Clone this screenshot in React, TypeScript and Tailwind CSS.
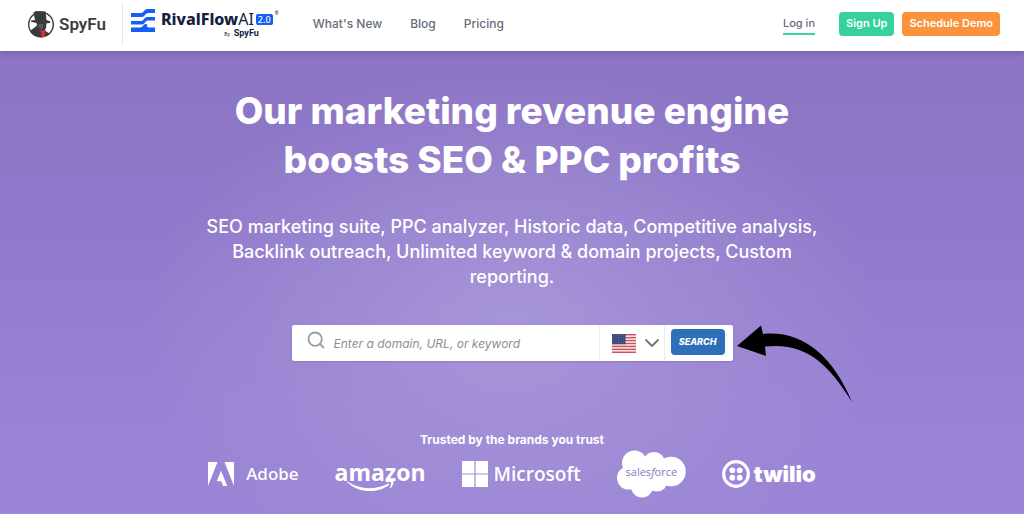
import type { ReactNode } from "react";
import { ChevronDown, Search } from "lucide-react";

// ── Data ──────────────────────────────────────────────────────────────────────

const NAV_LINKS = [
  { label: "What's New", href: "#whats-new" },
  { label: "Blog", href: "#blog" },
  { label: "Pricing", href: "#pricing" },
];

const STRIPES = [0, 2, 4, 6, 8, 10, 12];
const STAR_ROWS = [1, 2.7, 4.4, 6.1];
const STAR_COLS = [1.2, 3.6, 6, 8.4, 10.8];

// ── Logos ─────────────────────────────────────────────────────────────────────

function SpyFuLogo() {
  return (
    <a href="#home" className="flex items-center gap-1">
      <svg className="size-7" viewBox="0 0 28 28" aria-hidden="true">
        <circle cx="14" cy="14.5" r="12.3" fill="#fff" stroke="#3a3a3c" strokeWidth="1.4" />
        <path
          d="M6.5 2.500 9 1l9.500.5 1 8.500 4 1.400-.6 1.600-3.400.2-.5 4.800-1.500 2.600 5.500 3.100C20 26 17 27.200 14 27.200 9 27.200 5 25 3 21l4.500-3.500 2.500-2-.5-2.500-5.500-1.200.2-1.300L8 10z"
          fill="#3a3a3c"
        />
        <path d="M11 14h5l.5 3-2 2.200-2.500-1.200z" fill="#59595b" />
        <path d="m12.500 20 3 .8 1.500-1.200 2 1-1.200 2 .5 4-2.600 1-1.800-3 .4-2z" fill="#e3263a" />
      </svg>
      <span className="font-['Roboto',sans-serif] text-[17px] leading-6 font-semibold text-[#3d3d3f]">SpyFu</span>
    </a>
  );
}

function RivalFlowLogo() {
  return (
    <a href="#rivalflow" className="flex items-start gap-1.5 text-[#14203f]">
      <svg className="h-6 w-6" viewBox="0 0 24 24" fill="#1460f5" aria-hidden="true">
        <path d="M0 4h10c3 0 3-4 6-4h8v4h-7c-3 0-3 4-6 4H0z" />
        <path d="M0 12h10c3 0 3-4 6-4h8v3.500h-7c-3 0-3 4-6 4H0z" />
        <path d="M0 18.500h9c3 0 3-3.500 6-3.500h1.500c-1.500 1.500-.5 3.500 2 3.500H24V23H0z" />
      </svg>
      <span className="flex flex-col items-end">
        <span className="flex items-center gap-0.5 font-['Noto_Sans',sans-serif] text-base leading-5 font-extrabold">
          <span>
            RivalFlow<span className="font-normal">AI</span>
          </span>
          <span className="rounded-xs bg-[#1460f5] px-0.5 text-[9px] leading-[11px] font-medium text-white">2.0</span>
          <span className="self-start text-[5px] leading-2 font-normal">®</span>
        </span>
        <span className="mr-5 flex items-baseline gap-1 font-['Roboto',sans-serif] text-[9px] leading-2 font-bold">
          <span className="text-[5px] font-normal">By</span>SpyFu
        </span>
      </span>
    </a>
  );
}

function AdobeLogo() {
  return (
    <div className="flex items-center gap-3">
      <svg className="h-6 w-[26px]" viewBox="0 0 26 24" fill="currentColor" aria-hidden="true">
        <path d="M0 0h9.500L0 24zM16.500 0H26v24zM13 8.800 19.200 24h-4.100l-1.900-4.700H8.700z" />
      </svg>
      <span className="font-['Noto_Sans',sans-serif] text-[17px] font-medium">Adobe</span>
    </div>
  );
}

function AmazonLogo() {
  return (
    <div className="flex flex-col pt-1">
      <span className="font-['Open_Sans',sans-serif] text-[23px] leading-6 font-bold">amazon</span>
      <svg className="-mt-1 ml-3 h-3 w-12" viewBox="0 0 48 12" fill="currentColor" aria-hidden="true">
        <path d="M.5 1.500C13 10 28 10 41 3.700c1-.4 1.700.6.900 1.300C31 13.500 12 13.500.2 2.200c-.4-.5-.1-1 .3-.7z" />
        <path d="M38.500 1.600c2.600-1.700 7-1.600 7.800-.9.700.8-.3 5.300-2.800 7.300-.5.300-.8.100-.6-.4.700-1.700 1.700-4.500 1.100-5.200-.6-.7-3.600-.3-5.100-.2-.5 0-.7-.3-.4-.6z" />
      </svg>
    </div>
  );
}

function MicrosoftLogo() {
  return (
    <div className="flex items-center gap-1.5">
      <svg className="size-[26px]" viewBox="0 0 26 26" fill="currentColor" aria-hidden="true">
        <path d="M0 0h12.400v12.400H0zM13.600 0H26v12.400H13.600zM0 13.600h12.400V26H0zM13.600 13.600H26V26H13.600z" />
      </svg>
      <span className="font-['Open_Sans',sans-serif] text-[19px] font-semibold">Microsoft</span>
    </div>
  );
}

function SalesforceLogo() {
  return (
    <div className="relative flex h-12 w-[69px] items-center justify-center pb-1">
      <svg className="absolute inset-0 size-full" viewBox="0 0 69 48" fill="currentColor" aria-hidden="true">
        <circle cx="17.500" cy="13" r="12.500" />
        <circle cx="37" cy="13" r="11" />
        <circle cx="54" cy="21.500" r="14.800" />
        <circle cx="11.500" cy="28" r="11.500" />
        <circle cx="25" cy="36.500" r="11" />
        <circle cx="40" cy="31" r="10.500" />
        <path d="M12 14h36v18H12z" />
      </svg>
      <span className="relative font-['Open_Sans',sans-serif] text-[11px] leading-3 font-medium text-[#8a76c4]">
        sales<i>f</i>orce
      </span>
    </div>
  );
}

function TwilioLogo() {
  return (
    <div className="flex items-center gap-1">
      <svg className="size-7" viewBox="0 0 28 28" fill="currentColor" aria-hidden="true">
        <circle cx="14" cy="14" r="12.3" fill="none" stroke="currentColor" strokeWidth="3.2" />
        <circle cx="10.3" cy="10.3" r="2.9" />
        <circle cx="17.7" cy="10.3" r="2.9" />
        <circle cx="10.3" cy="17.7" r="2.9" />
        <circle cx="17.7" cy="17.7" r="2.9" />
      </svg>
      <span className="text-[22px] font-black">twilio</span>
    </div>
  );
}

// ── Search form ───────────────────────────────────────────────────────────────

function UsFlag() {
  return (
    <svg className="h-[19px] w-6" viewBox="0 0 24 13" preserveAspectRatio="none" aria-hidden="true">
      <rect width="24" height="13" fill="#f7f1f3" />
      {STRIPES.map((y) => (
        <rect key={y} y={y} width="24" height="1" fill="#c9505c" />
      ))}
      <rect width="13.500" height="7" fill="#3b4a7a" />
      {STAR_ROWS.map((y) =>
        STAR_COLS.map((x) => <rect key={`${x}-${y}`} x={x} y={y - 0.5} width="0.9" height="0.5" fill="#7f8bb3" />)
      )}
    </svg>
  );
}

function CurvedArrow() {
  return (
    <svg
      className="absolute top-0 left-full ml-1 h-[77px] w-[115px]"
      viewBox="0 0 115 77"
      fill="#000"
      aria-hidden="true"
    >
      <path d="M0 21 24 .5 26 9C64 5 95 29 115 77 92 40 70 17 28 21.500L29 31z" />
    </svg>
  );
}

function SearchForm() {
  return (
    <form
      className="relative mx-auto mt-9 w-full max-w-[441px]"
      onSubmit={(e) => e.preventDefault()}
    >
      <div className="flex h-9 items-stretch rounded-xs bg-white shadow-sm">
        <label htmlFor="query" className="flex items-center pb-1.5 pl-3.5 text-[#9a9ca6]">
          <Search className="size-5" strokeWidth={2.2} aria-label="Search term" />
        </label>
        <input
          id="query"
          type="text"
          placeholder="Enter a domain, URL, or keyword"
          className="min-w-0 flex-1 px-2 pt-0.5 text-xs text-gray-700 italic outline-none placeholder:text-[#8e8e93]"
        />
        <div className="relative flex items-center gap-1 border-x border-[#ededf1] pl-3">
          <UsFlag />
          <ChevronDown className="size-6 text-[#77777d]" aria-hidden="true" />
          <select aria-label="Country" className="absolute inset-0 size-full cursor-pointer opacity-0">
            <option>US</option>
          </select>
        </div>
        <button
          type="submit"
          className="mt-1 mr-2 mb-1.5 ml-1.5 rounded-sm bg-[#2d6fb8] px-2 text-[9px] font-extrabold text-white italic"
        >
          SEARCH
        </button>
      </div>
      <CurvedArrow />
    </form>
  );
}

// ── Page ──────────────────────────────────────────────────────────────────────

function Header() {
  return (
    <header className="relative flex h-[51px] items-center bg-white pr-6 pb-1 pl-[27px] text-xs font-medium text-[#676e78] shadow-md">
      <SpyFuLogo />
      <div className="mr-2 ml-4 h-11 w-px bg-[#e6e6ec]" />
      <RivalFlowLogo />
      <nav className="ml-[34px] flex gap-7">
        {NAV_LINKS.map((link) => (
          <a key={link.label} href={link.href}>
            {link.label}
          </a>
        ))}
      </nav>
      <div className="ml-auto flex items-center gap-2 text-[11px] font-semibold">
        <a href="#login" className="mr-4 border-b-2 border-[#38d39f] pt-1 pb-0.5 font-medium">
          Log in
        </a>
        <button type="button" className="h-6 rounded-sm bg-[#35d29b] px-[7px] text-white">
          Sign Up
        </button>
        <button type="button" className="h-6 rounded-sm bg-[#fb923c] px-[7px] text-white">
          Schedule Demo
        </button>
      </div>
    </header>
  );
}

function Brands({ children }: { children: ReactNode }) {
  return (
    <section className="mt-[71px]">
      <h2 className="text-xs leading-4 font-bold">Trusted by the brands you trust</h2>
      <div className="mt-0.5 flex items-center justify-center gap-9">{children}</div>
    </section>
  );
}

export default function App() {
  return (
    <div className="flex min-h-screen flex-col font-['Inter',sans-serif]">
      <Header />
      <main className="flex-1 bg-[radial-gradient(ellipse_36%_56%_at_50%_60%,#a795d8_0%,#a795d800_100%),linear-gradient(#8b74c3,#9079ca_35%,#9a83d5_80%,#9b85d6)] px-6 pt-[35px] text-center text-white">
        <h1 className="mx-auto max-w-[600px] text-[37px] leading-[49px] font-extrabold">
          Our marketing revenue engine boosts SEO &amp; PPC profits
        </h1>
        <p className="mx-auto mt-[30px] max-w-[640px] text-lg leading-[25px] font-medium">
          SEO marketing suite, PPC analyzer, Historic data, Competitive analysis, Backlink outreach, Unlimited keyword
          &amp; domain projects, Custom reporting.
        </p>
        <SearchForm />
        <Brands>
          <AdobeLogo />
          <AmazonLogo />
          <MicrosoftLogo />
          <SalesforceLogo />
          <TwilioLogo />
        </Brands>
      </main>
    </div>
  );
}
